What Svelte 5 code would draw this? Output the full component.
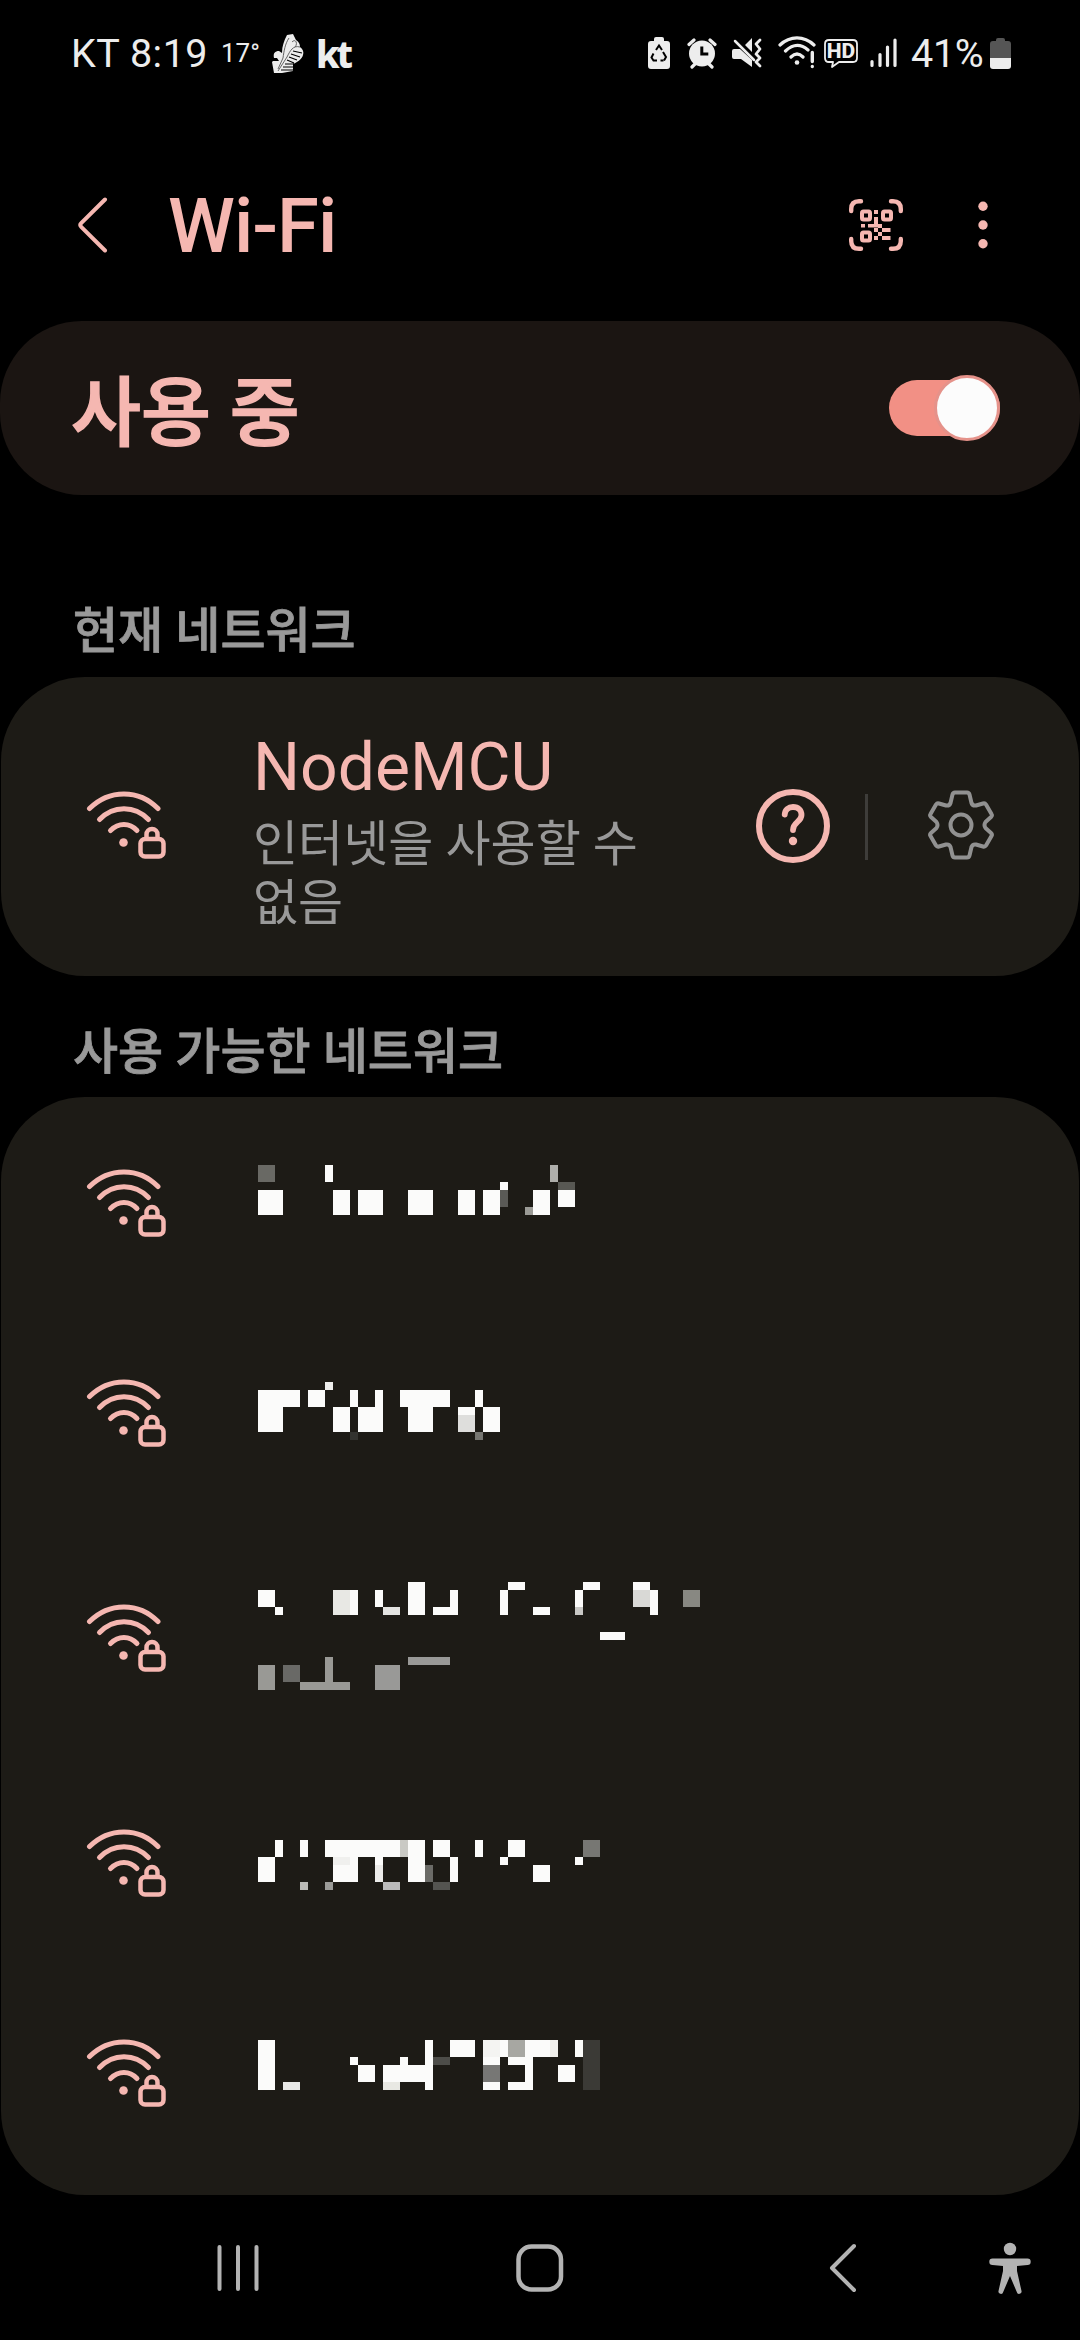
<script lang="ts">
  // x, y, width, height and an optional shade
  type Block = [number, number, number, number, string?];

  interface Network {
    id: number;
    tall?: boolean;
    blocks: Block[];
  }

  let enabled = $state(true);

  const networks: Network[] = [
    {
      id: 1,
      blocks: [
        [0, 67, 17, 17, '#696964'], [67, 67, 8, 17], [0, 92, 25, 25], [75, 92, 17, 25],
        [100, 92, 25, 25], [150, 92, 25, 25], [200, 92, 17, 25], [225, 92, 17, 25],
        [242, 84, 8, 8], [242, 92, 8, 17, '#5a5a56'], [267, 109, 8, 8, '#9b9b96'],
        [275, 92, 17, 25], [292, 67, 8, 17, '#afafab'], [300, 84, 17, 8, '#585853'],
        [300, 92, 17, 17],
      ],
    },
    {
      id: 2,
      blocks: [
        [0, 82, 42, 17], [0, 99, 25, 25], [50, 82, 17, 17], [67, 74, 8, 8, '#eeeeec'],
        [75, 99, 17, 25], [92, 82, 8, 17], [100, 99, 25, 25], [117, 82, 8, 17],
        [92, 124, 8, 8, '#33332f'], [142, 82, 50, 17], [150, 99, 25, 25], [200, 99, 17, 8],
        [200, 107, 17, 17, '#dededc'], [217, 82, 8, 17], [225, 99, 17, 25],
        [217, 124, 8, 8, '#767671'],
      ],
    },
    {
      id: 3,
      tall: true,
      blocks: [
        [0, 72, 17, 17], [17, 89, 8, 8], [75, 72, 17, 25, '#e8e8e4'], [92, 72, 8, 25],
        [117, 72, 8, 17], [125, 89, 17, 8, '#e4e4e2'], [150, 64, 17, 33], [175, 89, 25, 8],
        [192, 72, 8, 25], [242, 72, 8, 25], [250, 64, 17, 8], [275, 89, 17, 8],
        [317, 72, 8, 17], [317, 89, 8, 8, '#c8c8c5'], [325, 64, 17, 8], [342, 114, 25, 8],
        [375, 64, 17, 8], [375, 72, 17, 17, '#d9d9d6'], [392, 72, 8, 25],
        [425, 72, 17, 17, '#888882'],
        [0, 147, 17, 25, '#999995'], [25, 147, 17, 17, '#696966'],
        [42, 164, 50, 8, '#999995'], [67, 139, 8, 25, '#999995'],
        [117, 147, 25, 25, '#999997'], [150, 139, 42, 8, '#999997'],
      ],
    },
    {
      id: 4,
      blocks: [
        [0, 99, 17, 25], [17, 82, 8, 17], [42, 82, 8, 17], [67, 82, 75, 17],
        [75, 99, 25, 25], [75, 99, 17, 8, '#f0f0ee'], [117, 99, 8, 8],
        [117, 107, 8, 17, '#ececea'], [142, 82, 8, 17, '#c9c9c4'], [150, 82, 17, 42],
        [175, 82, 17, 17], [192, 99, 8, 25], [167, 107, 8, 17, '#6b6b67'],
        [42, 124, 8, 8, '#bbbbb7'], [67, 124, 8, 8, '#9b9b98'], [125, 124, 17, 8, '#bbbbbb'],
        [175, 124, 17, 8, '#545450'], [217, 82, 8, 17], [242, 99, 8, 8], [250, 82, 17, 17],
        [275, 107, 17, 17], [317, 99, 8, 8], [325, 82, 17, 17, '#777773'],
      ],
    },
    {
      id: 5,
      blocks: [
        [0, 72, 17, 50], [25, 114, 17, 8, '#e8e8e6'], [92, 89, 8, 8], [100, 97, 17, 17],
        [125, 97, 50, 17], [125, 114, 17, 8, '#e8e8e3'], [142, 89, 8, 8], [167, 72, 8, 50],
        [175, 89, 17, 8, '#4d4d49'], [192, 72, 25, 17], [225, 72, 17, 17, '#f4f4f2'],
        [225, 89, 17, 8], [225, 97, 17, 17, '#777775'], [225, 114, 17, 8], [242, 72, 8, 17],
        [250, 72, 17, 17, '#a7a7a2'], [267, 72, 25, 17], [292, 72, 8, 17, '#f0efeb'],
        [250, 89, 25, 8], [267, 89, 8, 33], [250, 114, 25, 8], [300, 97, 17, 17],
        [317, 72, 8, 17], [325, 72, 17, 50, '#3b3a36'],
      ],
    },
  ];
</script>

{#snippet securedWifi()}
  <svg class="wifi" width="80" height="68" viewBox="0 0 80 68" fill="none" stroke="currentColor" stroke-width="5" stroke-linecap="round" aria-hidden="true">
    <path d="M3.500 17.500C23 -2 53 -2 72 17.500" />
    <path d="M13.500 28.500C27 14 49 14 62.500 28.500" />
    <path d="M24.500 39.500C32.500 31.500 43.500 31.500 51 39.500" />
    <circle cx="37.500" cy="51.500" r="4.300" fill="currentColor" stroke="none" />
    <rect x="54.500" y="48" width="23" height="17.500" rx="4.500" stroke-width="4.500" />
    <path d="M60.500 48v-4.500a5.500 5.500 0 0 1 11 0V48" stroke-width="4.500" stroke-linecap="butt" />
  </svg>
{/snippet}

<div class="screen">
  <div class="status">
    <span class="carrier">KT 8:19</span>
    <span class="temp">17°</span>
    <svg class="shoe" width="32" height="40" viewBox="0 0 32 40" aria-hidden="true">
      <path d="M15 2l6-1 3 6c3 2 4 4 4 7 3 2 4 5 3 8-1 4-5 7-10 9v7L10 40H2L0 29l1-1h6l-2-3-3 0c-1-5 1-7 5-7l3 2c0-7 2-12 5-18z" fill="#ededed" />
      <path d="M17 5c-4 6-5 13-6 20l-5 11M28 14c-7-2-10 4-13 10L6 38M20 9c4-4 6 2 3 5" fill="none" stroke="#555" stroke-width="0.900" />
      <path d="M21 18l9 2M19 21l9 3M17 24l8 3M15 27l7 3M13 31h9M11 34h11M9 37h12" stroke="#000" stroke-width="1.100" />
    </svg>
    <span class="kt">kt</span>

    <div class="indicators">
      <svg width="22" height="40" viewBox="0 0 22 40" aria-hidden="true">
        <path d="M6 8V6q0-2 2-2h6q2 0 2 2v2h3q3 0 3 3v22q0 3-3 3H3q-3 0-3-3V11q0-3 3-3z" fill="#ededed" />
        <path d="M8 17l3-4.500 3 4.500M15 19l3 5-2 3.500M12.500 27.500h3M9 27.500H5.500l-2-3 2-4" fill="none" stroke="#000" stroke-width="2" />
      </svg>
      <svg class="alarm" width="30" height="40" viewBox="0 0 30 40" aria-hidden="true">
        <circle cx="15" cy="20.500" r="13" fill="#ededed" />
        <path d="M2 11.500L7 7M28 11.500L23 7M5 34l3-3M25 34l-3-3" stroke="#ededed" stroke-width="3.200" stroke-linecap="round" />
        <path d="M14.800 13.500v7.500h6.500" fill="none" stroke="#000" stroke-width="3" />
      </svg>
      <svg class="mute" width="31" height="40" viewBox="0 0 31 40" aria-hidden="true">
        <path d="M0 18q0-2 2-2h6l12 11v7L9 26H2q-2 0-2-2zM13 12l7-7v14z" fill="#ededed" />
        <path d="M3 8l19 19" stroke="#ededed" stroke-width="2.500" stroke-linecap="round" />
        <path d="M28 7l-4 4 4 5-4 5 4 4-4 4 4 4" fill="none" stroke="#ededed" stroke-width="2.800" stroke-linecap="round" stroke-linejoin="round" />
      </svg>
      <svg class="net" width="38" height="40" viewBox="0 0 38 40" fill="none" stroke="#ededed" stroke-width="3.200" stroke-linecap="round" aria-hidden="true">
        <path d="M2 12C12 2.500 26 2.500 36 12M7.500 18C15 11 23 11 30 17M13 24c4-4 8-4 12 0" />
        <circle cx="19" cy="29.500" r="2.300" fill="#ededed" stroke="none" />
        <path d="M34.300 19.500v9M34.300 33.500v.1" stroke-width="3.400" />
      </svg>
      <svg class="hd" width="36" height="40" viewBox="0 0 36 40" aria-hidden="true">
        <path d="M6 7h24q4 0 4 4v14q0 4-4 4H16l-7 5 1-5H6q-4 0-4-4V11q0-4 4-4z" fill="none" stroke="#ededed" stroke-width="1.800" stroke-linejoin="round" />
        <text x="18" y="25.300" text-anchor="middle">HD</text>
      </svg>
      <svg class="signal" width="28" height="40" viewBox="0 0 28 40" stroke="#ededed" stroke-width="3.200" stroke-linecap="round" aria-hidden="true">
        <path d="M2 28.500v4M10 21.500v11M17.500 14v18.500M25 7v25.500" />
      </svg>
      <span class="percent">41%</span>
      <svg class="battery" width="21" height="40" viewBox="0 0 21 40" aria-hidden="true">
        <path d="M6 8V7q0-2 2-2h5q2 0 2 2v1h3q3 0 3 3v14H0V11q0-3 3-3z" fill="#555" />
        <path d="M0 25h21v8q0 3-3 3H3q-3 0-3-3z" fill="#ededed" />
      </svg>
    </div>
  </div>

  <header>
    <button class="back" aria-label="뒤로">
      <svg width="32" height="56" viewBox="0 0 32 56" fill="none" stroke="currentColor" stroke-width="4" stroke-linecap="round" stroke-linejoin="round">
        <path d="M28 2.500L4.200 26.200q-1.800 1.800 0 3.600L28 53.500" />
      </svg>
    </button>
    <h1>Wi-Fi</h1>
    <button class="scan" aria-label="QR">
      <svg width="54" height="52" viewBox="0 0 54 52" fill="none" stroke="currentColor">
        <path d="M2.200 12V10Q2.200 2.200 10 2.200H12M42 2.200H44Q51.800 2.200 51.800 10V12M2.200 40V42Q2.200 49.800 10 49.800H12M42 49.800H44Q51.800 49.800 51.800 42V40" stroke-width="4.400" stroke-linecap="round" />
        <g stroke-width="4">
          <rect x="13" y="12.500" width="8" height="8" rx="1.500" />
          <rect x="34" y="12.500" width="8" height="8" rx="1.500" />
          <rect x="13" y="33.500" width="8" height="8" rx="1.500" />
        </g>
        <path fill="currentColor" stroke="none" d="M25 11h4v4h-4zM25 18h4v7h4v4h-4v-0.500h-10V25h6zM12 25h4v3.500h-4zM25 29h4v4h-4zM33 29h8.500v4H33zM29 33h4v4h-4zM25 37h4v4h-4zM33 37h8.500v4H33z" />
      </svg>
    </button>
    <button class="more" aria-label="더보기">
      <svg width="10" height="48" viewBox="0 0 10 48" fill="currentColor">
        <circle cx="5" cy="5.300" r="4.700" />
        <circle cx="5" cy="24" r="4.700" />
        <circle cx="5" cy="42.700" r="4.700" />
      </svg>
    </button>
  </header>

  <section class="master">
    <span>사용 중</span>
    <button
      class="switch"
      class:on={enabled}
      role="switch"
      aria-checked={enabled}
      aria-label="Wi-Fi"
      onclick={() => (enabled = !enabled)}
    >
      <i></i>
    </button>
  </section>

  <h2 class="current-title">현재 네트워크</h2>
  <section class="card current">
    {@render securedWifi()}
    <div class="info">
      <strong>NodeMCU</strong>
      <p>인터넷을 사용할 수 없음</p>
    </div>
    <svg class="help" width="74" height="74" viewBox="0 0 74 74" fill="none" stroke="currentColor" stroke-width="6" aria-hidden="true">
      <circle cx="37" cy="37" r="34" />
      <path d="M28.700 25.500C29 20.500 32.500 18 37 18C42.500 18 45.500 21.500 45.500 26C45.500 33 37 33 37 41" stroke-width="5.800" stroke-linecap="round" />
      <circle cx="37" cy="52" r="4.200" fill="currentColor" stroke="none" />
    </svg>
    <div class="divider"></div>
    <svg class="gear" width="66" height="70" viewBox="0 0 66 70" fill="none" stroke="currentColor" stroke-width="4" stroke-linejoin="round" aria-hidden="true">
      <path d="M27 2.500H39Q41 2.500 41.500 4.500L43.500 13Q44.500 16 48 15.500L55 13.500Q57 13 58 14.500L63.500 24Q64.500 25.500 63 27L57.500 32Q55.500 35 57.500 38L63 43Q64.500 44.500 63.500 46L58 55.500Q57 57 55 56.500L48 54.500Q44.500 54 43.500 57L41.500 65.500Q41 67.500 39 67.500H27Q25 67.500 24.500 65.500L22.500 57Q21.500 54 18 54.500L11 56.500Q9 57 8 55.500L2.500 46Q1.500 44.500 3 43L8.500 38Q10.500 35 8.500 32L3 27Q1.500 25.500 2.500 24L8 14.500Q9 13 11 13.500L18 15.500Q21.500 16 22.500 13L24.500 4.500Q25 2.500 27 2.500Z" />
      <circle cx="33" cy="35" r="10.500" />
    </svg>
  </section>

  <h2 class="available-title">사용 가능한 네트워크</h2>
  <section class="card list">
    {#each networks as network (network.id)}
      <div class="row" class:tall={network.tall}>
        {@render securedWifi()}
        <svg class="name" width="450" height="100%" shape-rendering="crispEdges" aria-hidden="true">
          {#each network.blocks as [x, y, width, height, shade]}
            <rect {x} {y} {width} {height} fill={shade ?? '#fbfbfa'} />
          {/each}
        </svg>
      </div>
    {/each}
  </section>

  <nav>
    <svg class="recents" width="42" height="48" viewBox="0 0 42 48" stroke="currentColor" stroke-width="4" stroke-linecap="round" aria-hidden="true">
      <path d="M2.500 3v42M21 3v42M39.500 3v42" />
    </svg>
    <svg class="home" width="48" height="48" viewBox="0 0 48 48" fill="none" stroke="currentColor" stroke-width="4.500" aria-hidden="true">
      <rect x="2.500" y="2.500" width="42.500" height="43" rx="13" />
    </svg>
    <svg class="nav-back" width="28" height="52" viewBox="0 0 28 52" fill="none" stroke="currentColor" stroke-width="4" stroke-linecap="round" stroke-linejoin="round" aria-hidden="true">
      <path d="M25 4L3 26l22 22" />
    </svg>
    <svg class="person" width="42" height="52" viewBox="0 0 42 52" fill="currentColor" aria-hidden="true">
      <circle cx="21" cy="7" r="6.200" />
      <path d="M3.500 16.500h35a3.200 3.200 0 0 1 0 6.400L28 24v5l4.500 20a2.400 2.400 0 0 1-4.700 1L21 34l-6.800 16a2.400 2.400 0 0 1-4.700-1L14 29v-5L3.500 22.900a3.200 3.200 0 0 1 0-6.400z" />
    </svg>
  </nav>
</div>

<style>
  :global(body) {
    background: #000;
  }

  .screen {
    --accent: #f5b7b1;
    --muted: #999;
    --card: #1d1b16;
    width: 1080px;
    height: 2340px;
    overflow: hidden;
    background: #000;
    display: flex;
    flex-direction: column;
    font-family: Roboto, 'Noto Sans CJK KR', sans-serif;
  }

  button {
    padding: 0;
    border: none;
    background: transparent;
    color: inherit;
    display: flex;
  }

  svg {
    display: block;
    flex-shrink: 0;
  }

  h1,
  h2,
  p {
    margin: 0;
  }

  .status {
    height: 106px;
    display: flex;
    align-items: center;
    padding: 0 69px 0 71px;
    color: #ededed;
    white-space: nowrap;
  }

  .carrier {
    width: 150px;
    font-size: 39.5px;
    letter-spacing: 0.5px;
  }

  .temp {
    width: 51px;
    font-size: 26px;
  }

  .kt {
    margin-left: 12px;
    font-family: 'Noto Sans', sans-serif;
    font-size: 37px;
    font-weight: 800;
    letter-spacing: -3px;
  }

  .indicators {
    display: flex;
    align-items: center;
    margin-left: auto;
  }

  .alarm {
    margin-left: 17px;
  }

  .mute,
  .net {
    margin-left: 15px;
  }

  .hd {
    margin-left: 7px;
  }

  .hd text {
    font: 800 21px Roboto, sans-serif;
    fill: #ededed;
  }

  .signal {
    margin-left: 11px;
  }

  .percent {
    width: 73px;
    margin-left: 13px;
    font-size: 39.5px;
    letter-spacing: -0.3px;
  }

  .battery {
    margin-left: 6px;
  }

  header {
    height: 193px;
    margin-top: 22px;
    display: flex;
    align-items: center;
    color: var(--accent);
    padding: 0 92px 0 77px;
    transform: translateY(0);
    box-sizing: border-box;
  }

  h1 {
    margin-left: 59px;
    padding-top: 3px;
    font-size: 76px;
    font-weight: 500;
    line-height: 90px;
    letter-spacing: -1px;
  }

  .scan {
    margin-left: auto;
  }

  .more {
    margin-left: 75px;
  }

  .master {
    height: 174px;
    box-sizing: border-box;
    padding: 0 80px 0 71px;
    display: flex;
    align-items: center;
    justify-content: space-between;
    border-radius: 82px;
    background: #1b1512;
    color: var(--accent);
    font-size: 76px;
    font-weight: 500;
  }

  .master span {
    padding-bottom: 3px;
    -webkit-text-stroke: 1.6px currentColor;
  }

  .switch {
    width: 111px;
    height: 56px;
    border-radius: 28px;
    align-items: center;
    background: #555;
  }

  .switch i {
    width: 60px;
    height: 60px;
    flex-shrink: 0;
    border: 3px solid #777;
    border-radius: 50%;
    background: #fcfcfc;
  }

  .switch.on {
    justify-content: flex-end;
    background: #f29085;
  }

  .switch.on i {
    border-color: #e5928a;
  }

  h2 {
    padding-left: 73px;
    color: var(--muted);
    font-size: 49px;
    font-weight: 500;
    line-height: 60px;
    -webkit-text-stroke: 0.8px currentColor;
  }

  .current-title {
    margin-top: 107px;
    height: 75px;
  }

  .available-title {
    margin-top: 47px;
    height: 74px;
  }

  .card {
    margin: 0 1px;
    background: var(--card);
    border-radius: 84px;
  }

  .wifi {
    margin-left: 85px;
    color: var(--accent);
  }

  .current {
    height: 299px;
    display: flex;
    align-items: center;
  }

  .current .wifi {
    margin-bottom: 3px;
  }

  .info {
    width: 420px;
    margin-top: 8px;
    margin-left: 87px;
  }

  strong {
    display: block;
    color: var(--accent);
    font-size: 66px;
    font-weight: 400;
    line-height: 78px;
  }

  .info p {
    margin-top: 8px;
    color: var(--muted);
    font-size: 49px;
    line-height: 59px;
  }

  .help {
    margin-bottom: 1px;
    margin-left: 83px;
    color: var(--accent);
  }

  .divider {
    width: 3px;
    height: 66px;
    margin-left: 35px;
    background: #3e3d3a;
  }

  .gear {
    margin-bottom: 4px;
    margin-left: 60px;
    color: #919191;
  }

  .list {
    height: 1098px;
    padding-top: 1px;
    box-sizing: border-box;
  }

  .row {
    height: 210px;
    display: flex;
    align-items: center;
  }

  .row.tall {
    height: 240px;
  }

  .name {
    margin-left: 92px;
  }

  nav {
    flex: 1;
    display: flex;
    align-items: center;
    color: #b3b3b3;
  }

  .recents {
    margin-left: 217px;
  }

  .home {
    margin-left: 257px;
  }

  .nav-back {
    margin-left: 265px;
  }

  .person {
    margin-left: 132px;
  }
</style>
